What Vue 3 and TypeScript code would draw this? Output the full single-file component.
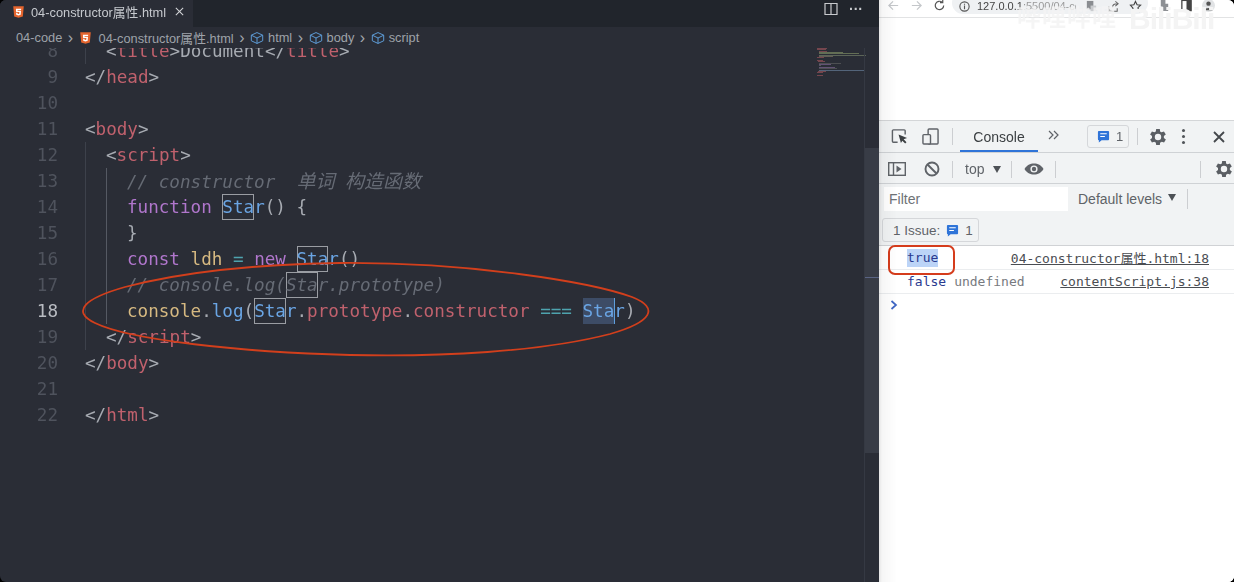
<script setup lang="ts">
interface Tok { t: string; c?: string; box?: boolean; sel?: boolean; cur?: boolean }
interface Line { n: number; indent: number; toks: Tok[] }

const tag = (name: string, close = false): Tok[] => [
  { t: close ? '</' : '<', c: 'p' },
  { t: name, c: 'r' },
  { t: '>', c: 'p' },
]

const lines: Line[] = [
  { n: 8, indent: 1, toks: [...tag('title'), { t: 'Document', c: 'p' }, ...tag('title', true)] },
  { n: 9, indent: 0, toks: tag('head', true) },
  { n: 10, indent: 0, toks: [] },
  { n: 11, indent: 0, toks: tag('body') },
  { n: 12, indent: 1, toks: tag('script') },
  { n: 13, indent: 2, toks: [{ t: '// constructor  ', c: 'cm' }, { t: '单词', c: 'cm cn' }, { t: ' ', c: 'cm' }, { t: '构造函数', c: 'cm cn' }] },
  { n: 14, indent: 2, toks: [{ t: 'function ', c: 'k' }, { t: 'Sta', c: 'b', box: true }, { t: 'r', c: 'b' }, { t: '() {', c: 'p' }] },
  { n: 15, indent: 2, toks: [{ t: '}', c: 'p' }] },
  { n: 16, indent: 2, toks: [{ t: 'const ', c: 'k' }, { t: 'ldh', c: 'y' }, { t: ' = ', c: 'o' }, { t: 'new ', c: 'k' }, { t: 'Sta', c: 'b', box: true }, { t: 'r', c: 'b' }, { t: '()', c: 'p' }] },
  { n: 17, indent: 2, toks: [{ t: '// console.log(', c: 'cm' }, { t: 'Sta', c: 'cm', box: true }, { t: 'r.prototype)', c: 'cm' }] },
  { n: 18, indent: 2, toks: [{ t: 'console', c: 'y' }, { t: '.', c: 'p' }, { t: 'log', c: 'b' }, { t: '(', c: 'p' }, { t: 'Sta', c: 'b', box: true }, { t: 'r', c: 'b' }, { t: '.', c: 'p' }, { t: 'prototype', c: 'r' }, { t: '.', c: 'p' }, { t: 'constructor', c: 'r' }, { t: ' === ', c: 'o' }, { t: 'Sta', c: 'b', sel: true }, { t: 'r', c: 'b', cur: true }, { t: ')', c: 'p' }] },
  { n: 19, indent: 1, toks: tag('script', true) },
  { n: 20, indent: 0, toks: tag('body', true) },
  { n: 21, indent: 0, toks: [] },
  { n: 22, indent: 0, toks: tag('html', true) },
]

const crumbs = ['html', 'body', 'script']
const miniLines = [
  [0, 10, '#a8565f'], [0, 9, '#a8565f'], [2, 8, '#a8565f'], [2, 24, '#8a9a6a'], [2, 40, '#8a9a6a'],
  [2, 47, '#7f8a70'], [2, 14, '#8a7a6a'], [0, 7, '#a8565f'], [0, 0, ''], [0, 6, '#a8565f'],
  [1, 7, '#a8565f'], [2, 22, '#666'], [2, 12, '#8a6aa0'], [2, 2, '#777'], [2, 16, '#8a6aa0'],
  [2, 18, '#666'], [2, 46, '#7088a8'], [1, 8, '#a8565f'], [0, 6, '#a8565f'], [0, 0, ''], [0, 6, '#a8565f'],
] as const
</script>

<template>
  <div class="screen">
    <section class="editor">
      <header class="tabbar">
        <div class="tab">
          <svg class="h5" viewBox="0 0 16 16"><path d="M1.5 1h13l-1.2 12.6L8 15.2l-5.3-1.6z" fill="#e5652e"/><path d="M11.3 4H4.8l.3 4h4l-.2 2-1 .4-1-.4-.1-1H5l.2 2.4L8 12.2l2.7-.8.4-5H6.9l-.1-.9h4.400z" fill="#fff"/></svg>
          <span class="tabname">04-constructor属性.html</span>
          <svg class="x" viewBox="0 0 12 12"><path d="M2 2l8 8M10 2l-8 8" stroke="#d5d7da" stroke-width="1.1" fill="none"/></svg>
        </div>
        <div class="tabfill">
          <svg class="split" viewBox="0 0 14 14"><path d="M1 1.500h12v11H1zM7 1.500v11" fill="none" stroke="#c8cace" stroke-width="1.200"/></svg>
          <span class="more">···</span>
        </div>
      </header>
      <nav class="crumbs">
        <span>04-code</span>
        <span class="chev">›</span>
        <svg class="h5 small" viewBox="0 0 16 16"><path d="M1.500 1h13l-1.200 12.600L8 15.200l-5.300-1.600z" fill="#e5652e"/><path d="M11.300 4H4.800l.3 4h4l-.2 2-1 .4-1-.4-.1-1H5l.2 2.400L8 12.200l2.700-.8.4-5H6.900l-.1-.9h4.400z" fill="#fff"/></svg>
        <span>04-constructor属性.html</span>
        <template v-for="c in crumbs" :key="c">
          <span class="chev">›</span>
          <svg class="cube" viewBox="0 0 16 16"><path d="M8 1.800l6.500 3v6.400L8 14.200l-6.500-3V4.800zM1.500 4.800L8 8l6.500-3.200M8 8v6.200" fill="none" stroke="#5f9fdc" stroke-width="1.100"/></svg>
          <span>{{ c }}</span>
        </template>
      </nav>
      <div class="codewrap">
        <div class="code">
          <div v-for="l in lines" :key="l.n" class="line">
            <span class="num" :class="{ active: l.n === 18 }">{{ l.n }}</span>
            <span class="text">
              <span v-for="i in l.indent" :key="i" class="guide" :class="{ second: i === 2 }"></span>
              <span
                v-for="(k, i) in l.toks"
                :key="i"
                :class="[k.c, { box: k.box, sel: k.sel, cur: k.cur }]"
              >{{ k.t }}</span>
            </span>
          </div>
        </div>
        <div class="minimap">
          <div v-for="(m, i) in miniLines" :key="i" class="mini" :style="{ marginLeft: m[0] + 'px', width: m[1] + 'px', background: m[2] }"></div>
        </div>
        <div class="scrollbar">
          <div class="thumb"><i class="mark"></i></div>
        </div>
      </div>
      <svg class="ring" viewBox="0 0 700 400">
        <path d="M340 263C470 262 590 282 632 297C660 308 652 322 610 334C540 352 440 357 350 355C240 352 130 340 95 323C70 311 86 298 125 287C190 270 270 264 340 263Z" fill="none" stroke="#d23f1c" stroke-width="1.800"/>
      </svg>
    </section>

    <section class="browser">
      <div class="chrome">
        <svg class="ci" viewBox="0 0 14 14"><path d="M12 7H2M6.500 2.500L2 7l4.500 4.500" fill="none" stroke="#c4c7ca" stroke-width="1.300"/></svg>
        <svg class="ci mid" viewBox="0 0 14 14"><path d="M2 7h10M7.500 2.500L12 7l-4.500 4.500" fill="none" stroke="#c4c7ca" stroke-width="1.300"/></svg>
        <svg class="ci mid" viewBox="0 0 14 14"><path d="M11.500 7A4.500 4.500 0 1 1 10 3.600M10.500 1v3h-3" fill="none" stroke="#555" stroke-width="1.300"/></svg>
        <div class="omni">
          <svg class="ci info" viewBox="0 0 14 14"><circle cx="7" cy="7" r="5" fill="none" stroke="#555" stroke-width="1.200"/><path d="M7 6v4M7 4v1.200" stroke="#555" stroke-width="1.200"/></svg>
          <span class="url">127.0.0.1<i>:5500/04-cc...</i></span>
          <svg class="ci" viewBox="0 0 14 14"><rect x="2" y="1" width="7" height="9" fill="#8a8d91"/><rect x="6" y="6" width="6" height="6" fill="#c9cbce"/></svg>
          <svg class="ci" viewBox="0 0 14 14"><path d="M2 7v5h9V9M6 8c0-3 2-4 5-4M9 1.500L12 4 9 6.500" fill="none" stroke="#666" stroke-width="1.100"/></svg>
          <svg class="ci" viewBox="0 0 14 14"><path d="M7 1.500l1.700 3.600 3.800.5-2.800 2.700.7 3.900L7 10.800l-3.400 1.900.7-3.900L1.500 5.600l3.800-.5z" fill="none" stroke="#444" stroke-width="1.200"/></svg>
        </div>
        <svg class="ci gap" viewBox="0 0 14 14"><path d="M3 1h5v4h3v8H5V8H3z" fill="#8d9094"/></svg>
        <svg class="ci" viewBox="0 0 14 14"><rect x="2" y="1.500" width="10" height="11" fill="none" stroke="#444" stroke-width="1.400"/><rect x="7" y="2" width="5" height="10" fill="#444"/></svg>
        <svg class="ci" viewBox="0 0 14 14"><circle cx="7" cy="7" r="7" fill="#e1e3e5"/><circle cx="7" cy="5" r="2.400" fill="#555"/><path d="M2.500 12c1-3 8-3 9 0z" fill="#555"/></svg>
        <span class="kebab small-k"></span>
      </div>
      <div class="page"></div>
      <span class="wm">哔哩哔哩</span>
      <span class="wm logo">BiliBili</span>
      <div class="devtools">
        <div class="bar bar1">
          <svg class="di" viewBox="0 0 18 18"><path d="M7 15H2.500a1 1 0 0 1-1-1V3a1 1 0 0 1 1-1H14a1 1 0 0 1 1 1v4" fill="none" stroke="#5f6368" stroke-width="1.500"/><path d="M8 7l9 3.500-3.600 1.500 3 3-1.400 1.400-3-3L10.500 16z" fill="#3c4043"/></svg>
          <svg class="di dev" viewBox="0 0 18 18"><rect x="6.500" y="1" width="10.500" height="16" rx="1" fill="none" stroke="#5f6368" stroke-width="1.500"/><rect x="1" y="7" width="8" height="10" rx="1" fill="#f1f3f4" stroke="#5f6368" stroke-width="1.500"/></svg>
          <i class="sep s1"></i>
          <div class="tabc">Console</div>
          <svg class="chevs" viewBox="0 0 11 10"><path d="M1 1l4 4-4 4M6 1l4 4-4 4" fill="none" stroke="#5f6368" stroke-width="1.200"/></svg>
          <div class="issuebtn top">
            <svg class="msg" viewBox="0 0 14 14"><path d="M1 2a1 1 0 0 1 1-1h10a1 1 0 0 1 1 1v8a1 1 0 0 1-1 1H5l-3 2.500V11H2a1 1 0 0 1-1-1z" fill="#2f74d8"/><path d="M3.500 4h7M3.500 7h5" stroke="#fff" stroke-width="1.200"/></svg>
            <span>1</span>
          </div>
          <i class="sep s2"></i>
          <svg class="gear" viewBox="0 0 24 24"><path d="M19.400 13a7.700 7.700 0 0 0 0-2l2.100-1.600-2-3.500-2.500 1a7.500 7.500 0 0 0-1.700-1L15 3.200h-4l-.4 2.700a7.500 7.500 0 0 0-1.700 1l-2.500-1-2 3.500L6.500 11a7.700 7.700 0 0 0 0 2l-2.100 1.600 2 3.500 2.500-1a7.500 7.500 0 0 0 1.700 1l.4 2.700h4l.4-2.700a7.500 7.500 0 0 0 1.700-1l2.500 1 2-3.500zM13 15.500a3.500 3.500 0 1 1 0-7 3.500 3.500 0 0 1 0 7z" transform="translate(-1 0)" fill="#5a5e63" fill-rule="evenodd"/></svg>
          <span class="kebab main-k"></span>
          <svg class="closex" viewBox="0 0 12 12"><path d="M1 1l10 10M11 1L1 11" stroke="#44484c" stroke-width="1.800"/></svg>
        </div>
        <div class="bar bar2">
          <svg class="panel" viewBox="0 0 18 14"><rect x=".7" y=".7" width="16.600" height="12.600" fill="none" stroke="#5f6368" stroke-width="1.400"/><path d="M5.500 1v12" stroke="#5f6368" stroke-width="1.400"/><path d="M8.500 3.500L13.500 7l-5 3.500z" fill="#5f6368"/></svg>
          <svg class="nope" viewBox="0 0 16 16"><circle cx="8" cy="8" r="6.500" fill="none" stroke="#5f6368" stroke-width="1.900"/><path d="M3.500 3.500l9 9" stroke="#5f6368" stroke-width="1.900"/></svg>
          <i class="sep s3"></i>
          <span class="topctx">top</span>
          <span class="caret"></span>
          <i class="sep s4"></i>
          <svg class="eye" viewBox="0 0 20 14"><path d="M.5 7C3 3 6 1.500 10 1.500S17 3 19.500 7C17 11 14 12.500 10 12.500S3 11 .5 7z" fill="#5f6368"/><circle cx="10" cy="7" r="3.600" fill="#f1f3f4"/><circle cx="10" cy="7" r="2.200" fill="#5f6368"/></svg>
          <i class="sep s5"></i>
          <i class="spacer"></i>
          <i class="sep"></i>
          <svg class="gear g2" viewBox="0 0 24 24"><path d="M19.400 13a7.700 7.700 0 0 0 0-2l2.100-1.600-2-3.500-2.500 1a7.500 7.500 0 0 0-1.700-1L15 3.200h-4l-.4 2.700a7.500 7.500 0 0 0-1.700 1l-2.500-1-2 3.500L6.500 11a7.700 7.700 0 0 0 0 2l-2.100 1.600 2 3.500 2.500-1a7.500 7.500 0 0 0 1.700 1l.4 2.700h4l.4-2.700a7.500 7.500 0 0 0 1.700-1l2.500 1 2-3.500zM13 15.500a3.500 3.500 0 1 1 0-7 3.500 3.500 0 0 1 0 7z" transform="translate(-1 0)" fill="#5a5e63" fill-rule="evenodd"/></svg>
        </div>
        <div class="bar3">
          <div class="filter">Filter</div>
          <span class="levels">Default levels</span>
          <span class="caret sm"></span>
          <i class="sep s6"></i>
        </div>
        <div class="bar4">
          <div class="issuebtn wide">
            <span>1 Issue:</span>
            <svg class="msg" viewBox="0 0 14 14"><path d="M1 2a1 1 0 0 1 1-1h10a1 1 0 0 1 1 1v8a1 1 0 0 1-1 1H5l-3 2.500V11H2a1 1 0 0 1-1-1z" fill="#2f74d8"/><path d="M3.500 4h7M3.500 7h5" stroke="#fff" stroke-width="1.200"/></svg>
            <span>1</span>
          </div>
        </div>
        <div class="logs">
          <div class="log">
            <span class="val"><b class="hl">true</b></span>
            <a class="src">04-constructor属性.html:18</a>
            <div class="redbox"></div>
          </div>
          <div class="log">
            <span class="val">false</span><span class="undef">undefined</span>
            <a class="src">contentScript.js:38</a>
          </div>
          <div class="prompt">
            <svg viewBox="0 0 8 10"><path d="M1.500 1l4.500 4-4.500 4" fill="none" stroke="#3f66c4" stroke-width="1.700"/></svg>
          </div>
        </div>
      </div>
      <div class="edge-shade"></div>
    </section>
  </div>
</template>

<style>
html, body { margin: 0; background: #000; overflow: hidden; }
</style>

<style scoped>
.screen {
  width: 1234px;
  height: 582px;
  display: flex;
  overflow: hidden;
  border-radius: 6px;
  font-family: "Liberation Sans", "Noto Sans CJK SC", sans-serif;
  filter: blur(0.35px);
}
.editor {
  position: relative;
  width: 879px;
  flex: none;
  display: flex;
  flex-direction: column;
  background: #2a2d36;
  color: #a7abb2;
}
.tabbar { height: 27px; display: flex; background: #21252c; flex: none; }
.tab {
  width: 193px;
  display: flex;
  align-items: center;
  padding: 0 0 4px 12px;
  box-sizing: border-box;
  background: #2a2d36;
  color: #c6c9ce;
  font-size: 12.800px;
}
.h5 { width: 13px; height: 14px; flex: none; }
.tabname { margin-left: 6px; white-space: nowrap; }
.x { width: 11px; height: 11px; margin-left: 8px; flex: none; }
.tabfill { flex: 1; display: flex; align-items: flex-start; justify-content: flex-end; padding: 2px 16px 0 0; gap: 11px; }
.split { width: 14px; height: 14px; }
.more { color: #c8cace; font-size: 14px; line-height: 15px; font-weight: 700; }
.crumbs {
  height: 21px;
  flex: none;
  display: flex;
  align-items: center;
  padding-left: 16px;
  font-size: 12.800px;
  color: #9ea2a9;
  white-space: nowrap;
  position: relative;
  z-index: 1;
  background: #2a2d36;
}
.chev { margin: 0 5.500px; font-size: 16px; line-height: 16px; color: #a3a7ad; }
.small { margin: 0 7px 0 0; }
.cube { width: 14px; height: 14px; margin-right: 4px; flex: none; }
.codewrap { position: relative; flex: 1; overflow: hidden; }
.code {
  margin-top: -10px;
  font-family: "DejaVu Sans Mono", "Noto Sans CJK SC", monospace;
  font-size: 17.600px;
  line-height: 26px;
}
.line { height: 26px; display: flex; white-space: pre; }
.num { width: 58px; text-align: right; color: #4f535d; flex: none; }
.num.active { color: #b9bcc2; }
.text { margin-left: 27px; display: block; position: relative; }
.guide { width: 21px; box-shadow: inset 1px 0 0 #3d414b; display: inline-block; height: 26px; vertical-align: top; }
.guide.second { box-shadow: inset 1px 0 0 #555963; }
.p { color: #a7abb2; }
.r { color: #c0616d; }
.b { color: #6aa5e4; }
.k { color: #b076cc; }
.y { color: #d6b981; }
.o { color: #4ea3ae; }
.cm { color: #666b75; font-style: italic; }
.cn { font-size: 19px; }
.box { box-shadow: inset 0 0 0 1px #9a9da3; display: inline-block; height: 26px; vertical-align: top; }
.sel { background: #3d4c66; display: inline-block; height: 26px; vertical-align: top; }
.cur { box-shadow: inset 1px 0 0 #5f9fdc; display: inline-block; height: 26px; vertical-align: top; }
.minimap {
  position: absolute;
  left: 817px;
  top: 0;
  width: 47px;
  display: flex;
  flex-direction: column;
  gap: .35px;
}
.mini { height: 1px; opacity: .6; }
.scrollbar {
  position: absolute;
  left: 864px;
  top: 0;
  bottom: 0;
  width: 15px;
  border-left: 1px solid #353943;
  box-sizing: border-box;
}
.thumb { position: relative; margin-top: 100px; height: 305px; background: #383c46; }
.mark { position: absolute; left: 0; right: 0; top: 129px; height: 1px; background: #5a6484; }
.ring { position: absolute; left: 0; top: 0; width: 700px; height: 400px; pointer-events: none; z-index: 2; }

.browser { position: relative; flex: 1; display: flex; flex-direction: column; background: #fff; min-width: 0; }
.edge-shade {
  position: absolute;
  left: 0;
  top: 0;
  bottom: 0;
  width: 18px;
  background: linear-gradient(90deg, rgba(0, 0, 0, .1), rgba(0, 0, 0, .035) 3px, rgba(0, 0, 0, 0));
  pointer-events: none;
}
.chrome {
  height: 17px;
  flex: none;
  display: flex;
  align-items: flex-start;
  gap: 9px;
  padding-left: 8px;
  background: #fff;
  border-bottom: 1px solid #e2e3e4;
  overflow: hidden;
}
.ci { width: 13px; height: 13px; flex: none; margin-top: -1px; }
.mid { margin-left: 1px; }
.omni {
  margin-top: -8px;
  height: 22px;
  width: 196px;
  margin-left: -3px;
  background: #eff1f3;
  border-radius: 11px;
  display: flex;
  align-items: center;
  gap: 9px;
  padding: 4px 6px 0;
  box-sizing: border-box;
  font-size: 11px;
  color: #444;
  white-space: nowrap;
}
.omni .ci { margin-top: 2px; }
.url { width: 106px; overflow: hidden; margin-left: -3px; margin-top: 1px; }
.url i { font-style: normal; color: #9a9a9a; }
.gap { margin-left: 1px; }
.small-k { transform: scale(.8); margin: -3px 0 0 11px; }
.page { height: 102px; flex: none; background: #fff; }
.wm { position: absolute; font-weight: 700; white-space: nowrap; color: #f4f4f4; }
.wm:not(.logo) { left: 138px; top: 9px; font-size: 24px; line-height: 18px; letter-spacing: 1px; opacity: .85; }
.wm.logo { left: 250px; top: 7px; font-size: 30px; line-height: 24px; letter-spacing: -1px; }
.devtools { flex: 1; display: flex; flex-direction: column; border-top: 1px solid #d4d6d8; background: #fff; }
.bar { display: flex; align-items: center; background: #f1f3f4; border-bottom: 1px solid #cfd2d5; box-sizing: border-box; flex: none; overflow: hidden; }
.bar1 { height: 32px; }
.di { width: 17px; height: 17px; margin-left: 12px; flex: none; }
.dev { margin-left: 14px; }
.sep { display: block; width: 1px; height: 17px; background: #ccced1; flex: none; }
.s1 { margin-left: 13px; }
.tabc {
  margin-left: 7px;
  width: 78px;
  height: 31px;
  box-sizing: border-box;
  padding-top: 8px;
  text-align: center;
  font-size: 14px;
  color: #3c4043;
  border-bottom: 2px solid #2f74d8;
}
.chevs { margin-left: 10px; width: 11px; height: 10px; margin-top: -3px; flex: none; }
.issuebtn {
  display: flex;
  align-items: center;
  gap: 6px;
  border: 1px solid #d5d7da;
  border-radius: 3px;
  box-sizing: border-box;
  font-size: 13px;
  color: #5f6368;
  background: #f1f3f4;
}
.issuebtn.top { margin-left: 28px; width: 42px; height: 23px; padding-left: 9px; }
.msg { width: 13px; height: 13px; flex: none; }
.s2 { margin-left: 8px; }
.gear { width: 22px; height: 22px; margin-left: 9px; flex: none; }
.kebab {
  width: 3px;
  height: 3px;
  border-radius: 50%;
  background: #505458;
  box-shadow: 0 -6px 0 #505458, 0 6px 0 #505458;
  flex: none;
  display: block;
}
.main-k { margin-left: 13px; }
.closex { width: 12px; height: 12px; margin-left: 28px; flex: none; }
.bar2 { height: 31px; padding-top: 2px; }
.panel { width: 18px; height: 14px; margin-left: 9px; flex: none; }
.nope { width: 16px; height: 16px; margin-left: 18px; flex: none; }
.s3 { margin-left: 12px; }
.topctx { margin-left: 12px; font-size: 14px; color: #5f6368; }
.caret { width: 0; height: 0; border: 4.500px solid transparent; border-top: 7px solid #4d5156; border-bottom: 0; margin-left: 9px; flex: none; }
.s4 { margin-left: 10px; }
.eye { width: 20px; height: 14px; margin-left: 12px; flex: none; }
.s5 { margin-left: 11px; }
.spacer { flex: 1; }
.g2 { margin-left: 12px; margin-right: -1px; }
.bar3 { height: 30px; display: flex; align-items: center; background: #f1f3f4; flex: none; padding-left: 5px; font-size: 14px; color: #5f6368; }
.filter { width: 184px; height: 24px; box-sizing: border-box; background: #fff; padding: 4px 0 0 5px; line-height: 17px; color: #6e7276; }
.levels { margin-left: 10px; }
.caret.sm { margin-left: 6px; margin-top: -3px; border-width: 4px; border-top-width: 7px; }
.s6 { margin-left: 11px; height: 20px; }
.bar4 { height: 32px; flex: none; display: flex; background: #f1f3f4; border-bottom: 1px solid #d0d2d5; box-sizing: border-box; padding: 4px 0 0 3px; }
.issuebtn.wide { width: 97px; height: 24px; padding-left: 10px; font-size: 13.500px; }
.logs { flex: 1; background: #fff; font-family: "DejaVu Sans Mono", "Noto Sans CJK SC", monospace; font-size: 13px; }
.log {
  position: relative;
  height: 24px;
  display: flex;
  align-items: center;
  padding: 0 25px 0 28px;
  border-bottom: 1px solid #ebedef;
  box-sizing: border-box;
  white-space: pre;
}
.val { color: #2a3a8f; }
.hl { font-weight: 400; background: #bcd4f7; padding: 1px 0 2px; }
.undef { color: #777a80; margin-left: 8px; }
.src { margin-left: auto; color: #4a4d52; text-decoration: underline; }
.redbox { position: absolute; left: 9px; top: -1px; width: 67px; height: 30px; box-sizing: border-box; border: 2px solid #d53c1c; border-radius: 7px; }
.prompt { padding: 6px 0 0 11px; }
.prompt svg { width: 8px; height: 10px; display: block; }
</style>
